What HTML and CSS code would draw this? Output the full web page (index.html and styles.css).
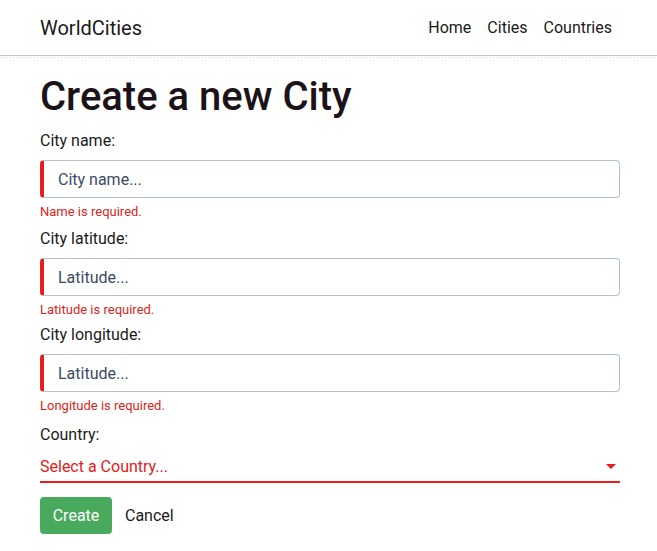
FILE: index.html
```html
<!DOCTYPE html>
<html lang="en">
<head>
<meta charset="utf-8">
<title>WorldCities</title>
<link rel="stylesheet" href="styles.css">
</head>
<body>
<header class="navbar">
  <a class="brand">WorldCities</a>
  <nav class="nav">
    <a>Home</a>
    <a>Cities</a>
    <a>Countries</a>
  </nav>
</header>
<main class="container">
  <h1 class="title">Create a new City</h1>
  <form class="form">
    <div class="group">
      <label class="label">City name:</label>
      <input class="input invalid" type="text" placeholder="City name...">
      <div class="error">Name is required.</div>
    </div>
    <div class="group">
      <label class="label">City latitude:</label>
      <input class="input invalid" type="text" placeholder="Latitude...">
      <div class="error tight">Latitude is required.</div>
    </div>
    <div class="group">
      <label class="label">City longitude:</label>
      <input class="input invalid" type="text" placeholder="Latitude...">
      <div class="error last">Longitude is required.</div>
    </div>
    <div class="group">
      <label class="label">Country:</label>
      <div class="select">
        <span class="select-text">Select a Country...</span>
        <span class="arrow"></span>
      </div>
    </div>
    <div class="actions">
      <button type="button" class="btn-create">Create</button>
      <button type="button" class="btn-cancel">Cancel</button>
    </div>
  </form>
</main>
</body>
</html>
```
FILE: styles.css
```css
* { box-sizing: border-box; }
body {
  margin: 0;
  font-family: Roboto, "Liberation Sans", sans-serif;
  color: #212121;
  background: #fff;
}
.navbar {
  height: 56px;
  display: flex;
  align-items: center;
  justify-content: space-between;
  padding: 0 45px 0 40px;
  border-bottom: 1px solid #bcc6d6;
  position: relative;
}
.navbar::after {
  content: "";
  position: absolute;
  left: 0; right: 0;
  bottom: -4px;
  height: 3px;
  background-image: radial-gradient(circle, #d6dbe3 0.7px, transparent 0.8px);
  background-size: 3px 3px;
}
.brand {
  font-size: 20px;
  color: #1a1a1a;
}
.nav { display: flex; gap: 16px; font-size: 16px; color: #1a1a1a; }
.container {
  padding: 0 37px 0 40px;
}
.title {
  margin: 17px 0 10px;
  font-size: 40px;
  font-weight: 500;
  line-height: 48px;
  color: #1c1318;
}
.group { display: flex; flex-direction: column; }
.label {
  font-size: 16px;
  line-height: 19px;
  color: #1a1a1a;
  margin-bottom: 10px;
}
.input {
  height: 38px;
  border: 1px solid #b3c0d2;
  border-left: 4px solid #ea1c1c;
  border-radius: 4px;
  padding: 0 14px;
  font-family: Roboto, sans-serif;
  font-size: 16px;
  outline: none;
}
.input::placeholder { color: #3c4a68; opacity: 1; }
.error {
  color: #d9261c;
  font-size: 13px;
  line-height: 15px;
  margin: 6px 0 10px;
}
.error.tight { margin-bottom: 8px; }
.error.last { margin-bottom: 12px; }
.select {
  display: flex;
  align-items: center;
  justify-content: space-between;
  height: 31px;
  border-bottom: 2px solid #ea1c1c;
  margin-top: -2px;
  padding: 0 4px 1px 0;
}
.select-text { color: #e0201a; font-size: 16px; line-height: 19px; }
.arrow {
  width: 0; height: 0;
  border-left: 5px solid transparent;
  border-right: 5px solid transparent;
  border-top: 5px solid #ea1c1c;
}
.actions {
  display: flex;
  align-items: center;
  gap: 5px;
  margin-top: 14px;
}
.btn-create {
  width: 72px;
  height: 37px;
  border: none;
  border-radius: 4px;
  background: #49aa5e;
  color: #fff;
  font-family: Roboto, sans-serif;
  font-size: 16px;
}
.btn-cancel {
  border: none;
  background: none;
  font-family: Roboto, sans-serif;
  font-size: 16px;
  color: #1a1a1a;
  padding: 0 8px;
}
```
